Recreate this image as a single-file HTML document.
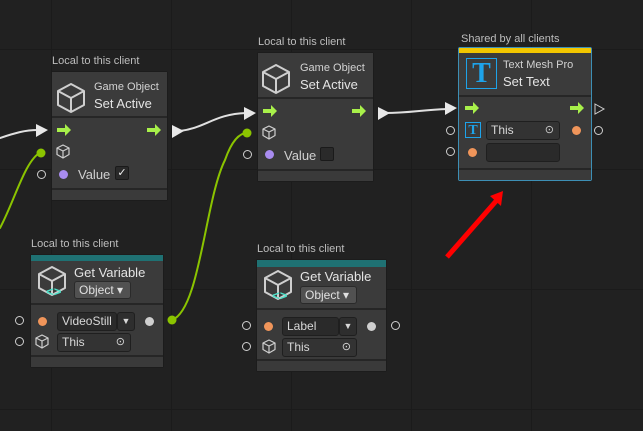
<!DOCTYPE html>
<html><head><style>
*{margin:0;padding:0;box-sizing:border-box}
body{width:643px;height:431px;overflow:hidden;background:#212121;font-family:"Liberation Sans",sans-serif;position:relative;
background-image:linear-gradient(90deg,#1b1b1b 1px,transparent 1px),linear-gradient(#1b1b1b 1px,transparent 1px);
background-size:120px 120px;background-position:51px 49px}
.abs{position:absolute}
.lbl{position:absolute;font-size:11px;color:#bdbdbd;white-space:nowrap}
.node{position:absolute;background:#3a3a3a;border:1px solid #1c1c1c;border-radius:2px}
.hd{position:absolute;left:0;right:0;top:0;background:#3b3b3b;border-bottom:2px solid #262626}
.ft{position:absolute;left:0;right:0;bottom:0;height:12px;background:#3a3a3a;border-top:2px solid #262626}
.t1{position:absolute;font-size:11px;color:#d2d2d2;white-space:nowrap}
.t2{position:absolute;font-size:13px;color:#e4e4e4;white-space:nowrap}
.oc{position:absolute;width:9px;height:9px;border:1px solid #cfcfcf;border-radius:50%}
.dot{position:absolute;width:9px;height:9px;border-radius:50%}
.fld{position:absolute;background:#2a2a2a;border:1px solid #1f1f1f;border-radius:3px;color:#d8d8d8;font-size:12px;padding-left:4px;line-height:17px;height:19px}
.dd{position:absolute;background:#515151;border:1px solid #2a2a2a;border-radius:3px;color:#e0e0e0;font-size:12px;line-height:16px;height:18px;padding-left:4px}
</style></head><body>
<svg class="abs" style="left:0;top:0" width="643" height="431">
<g fill="none" stroke-linecap="round">
<path d="M0 138 C15 133 25 130 38 130" stroke="#e0e0e0" stroke-width="2"/>
<path d="M180 131 C205 128 215 114 246 113" stroke="#e0e0e0" stroke-width="2"/>
<path d="M385 113 C410 113 420 110 448 109" stroke="#e0e0e0" stroke-width="2"/>
<path d="M41 152 C25 160 15 200 0 228" stroke="#8bc400" stroke-width="2"/>
<path d="M172 320 C200 310 205 200 225 160 C232 140 240 133 247 133" stroke="#8bc400" stroke-width="2"/>
</g>
<line x1="447" y1="257" x2="497" y2="200" stroke="#ff0000" stroke-width="5"/>
<polygon points="503,191 490,196 501,206" fill="#ff0000"/>
</svg>

<div class="lbl" style="left:52px;top:55px">Local to this client</div>
<div class="node" style="left:51px;top:71px;width:117px;height:130px">
<div class="hd" style="height:46px"></div>
<div class="t1" style="left:42px;top:9px">Game Object</div>
<div class="t2" style="left:42px;top:24px">Set Active</div>
<div class="dot" style="left:7px;top:98px;background:#a98cf0"></div>
<div class="t2" style="left:26px;top:95px;color:#d0d0d0">Value</div>
<div class="abs" style="left:63px;top:94px;width:14px;height:14px;background:#2a2a2a;border:1px solid #1a1a1a;border-radius:2px;color:#eee;font-size:11px;text-align:center;line-height:13px">✓</div>
<div class="ft"></div></div>
<div class="oc" style="left:37px;top:170px"></div>

<div class="lbl" style="left:258px;top:36px">Local to this client</div>
<div class="node" style="left:257px;top:52px;width:117px;height:130px">
<div class="hd" style="height:46px"></div>
<div class="t1" style="left:42px;top:9px">Game Object</div>
<div class="t2" style="left:42px;top:24px">Set Active</div>
<div class="dot" style="left:7px;top:97px;background:#a98cf0"></div>
<div class="t2" style="left:26px;top:95px;color:#d0d0d0">Value</div>
<div class="abs" style="left:62px;top:94px;width:14px;height:14px;background:#2a2a2a;border:1px solid #1a1a1a;border-radius:2px"></div>
<div class="ft"></div></div>
<div class="oc" style="left:243px;top:150px"></div>

<div class="lbl" style="left:461px;top:33px">Shared by all clients</div>
<div class="node" style="left:458px;top:47px;width:134px;height:134px;border-color:#3d8fb5">
<div class="abs" style="left:0;right:0;top:0;height:5px;background:#f2c600"></div>
<div class="hd" style="top:5px;height:44px"></div>
<div class="abs" style="left:7px;top:10px;width:31px;height:31px;border:1px solid #1ea3ea;color:#1ea3ea;font:bold 28px 'Liberation Serif',serif;text-align:center;line-height:30px">T</div>
<div class="t1" style="left:44px;top:11px">Text Mesh Pro</div>
<div class="t2" style="left:44px;top:26px">Set Text</div>
<div class="abs" style="left:6px;top:74px;width:16px;height:16px;border:1px solid #1ea3ea;color:#1ea3ea;font:bold 14px 'Liberation Serif',serif;text-align:center;line-height:15px">T</div>
<div class="fld" style="left:27px;top:73px;width:74px;background:#333">This<span style="position:absolute;right:5px;top:0;font-size:11px;color:#ccc">⊙</span></div>
<div class="dot" style="left:113px;top:78px;background:#f0955a"></div>
<div class="dot" style="left:9px;top:100px;background:#f0955a"></div>
<div class="fld" style="left:27px;top:95px;width:74px"></div>
<div class="ft"></div></div>
<div class="oc" style="left:446px;top:126px"></div>
<div class="oc" style="left:446px;top:147px"></div>
<div class="oc" style="left:594px;top:126px"></div>

<div class="lbl" style="left:31px;top:238px">Local to this client</div>
<div class="node" style="left:30px;top:254px;width:134px;height:114px">
<div class="abs" style="left:0;right:0;top:0;height:6px;background:#1f7173"></div>
<div class="hd" style="top:6px;height:44px"></div>
<div class="t2" style="left:43px;top:10px">Get Variable</div>
<div class="dd" style="left:43px;top:26px;width:57px">Object ▾</div>
<div class="dot" style="left:7px;top:62px;background:#f0955a"></div>
<div class="fld" style="left:26px;top:57px;width:60px">VideoStill</div>
<div class="fld" style="left:86px;top:57px;width:18px;background:#2e2e2e;padding:0;text-align:center;font-size:9px">▼</div>
<div class="dot" style="left:114px;top:62px;background:#cfcfcf"></div>
<div class="fld" style="left:26px;top:78px;width:74px;background:#333">This<span style="position:absolute;right:5px;top:0;font-size:11px">⊙</span></div>
<div class="ft"></div></div>
<div class="oc" style="left:15px;top:316px"></div>
<div class="oc" style="left:15px;top:337px"></div>

<div class="lbl" style="left:257px;top:243px">Local to this client</div>
<div class="node" style="left:256px;top:259px;width:131px;height:113px">
<div class="abs" style="left:0;right:0;top:0;height:7px;background:#1f7173"></div>
<div class="hd" style="top:7px;height:43px"></div>
<div class="t2" style="left:43px;top:9px">Get Variable</div>
<div class="dd" style="left:43px;top:26px;width:57px">Object ▾</div>
<div class="dot" style="left:7px;top:62px;background:#f0955a"></div>
<div class="fld" style="left:25px;top:57px;width:57px">Label</div>
<div class="fld" style="left:82px;top:57px;width:18px;background:#2e2e2e;padding:0;text-align:center;font-size:9px">▼</div>
<div class="dot" style="left:110px;top:62px;background:#cfcfcf"></div>
<div class="fld" style="left:25px;top:78px;width:75px;background:#333">This<span style="position:absolute;right:5px;top:0;font-size:11px">⊙</span></div>
<div class="ft"></div></div>
<div class="oc" style="left:242px;top:321px"></div>
<div class="oc" style="left:242px;top:342px"></div>
<div class="oc" style="left:391px;top:321px"></div>

<svg class="abs" style="left:0;top:0;z-index:5" width="643" height="431">
<defs>
<g id="cube" fill="none" stroke="#cfcfcf" stroke-width="2" stroke-linejoin="round"><path d="M0 -13 L13 -6 L13 8 L0 15 L-13 8 L-13 -6 Z M-13 -6 L0 1 L13 -6 M0 1 L0 15"/></g>
<g id="scube" fill="none" stroke="#cfcfcf" stroke-width="1.2" stroke-linejoin="round"><path d="M0 -6 L6 -3 L6 3.5 L0 7 L-6 3.5 L-6 -3 Z M-6 -3 L0 0 L6 -3 M0 0 L0 7"/></g>
<g id="arr" fill="#a8f04a"><rect x="-7" y="-2" width="9" height="4"/><polygon points="1,-6 7,0 1,6"/></g>
</defs>
<polygon points="36,124 48,130 36,137" fill="#e8e8e8"/>
<polygon points="172,125 184,131 172,138" fill="#e8e8e8"/>
<polygon points="244,107 256,113 244,120" fill="#e8e8e8"/>
<polygon points="378,107 390,113 378,120" fill="#e8e8e8"/>
<polygon points="445,102 457,108 445,115" fill="#e8e8e8"/>
<polygon points="595,104 604,109 595,114" fill="none" stroke="#cfcfcf"/>
<circle cx="41" cy="153" r="4.5" fill="#8bc400"/>
<circle cx="247" cy="133" r="4.5" fill="#8bc400"/>
<circle cx="172" cy="320" r="4.5" fill="#8bc400"/>
<use href="#cube" x="71" y="97"/><use href="#scube" x="63" y="151"/>
<use href="#arr" x="64" y="130"/><use href="#arr" x="154" y="130"/>
<use href="#cube" x="276" y="78"/><use href="#scube" x="269" y="132"/>
<use href="#arr" x="270" y="111"/><use href="#arr" x="359" y="111"/>
<use href="#arr" x="472" y="108"/><use href="#arr" x="577" y="108"/>
<use href="#cube" x="52" y="280"/><use href="#scube" x="42" y="341"/>
<use href="#cube" x="278" y="284"/><use href="#scube" x="269" y="346"/>
<text x="46" y="296" fill="#4ee0c8" font-size="13" font-weight="bold" font-family="Liberation Mono">&lt;&gt;</text>
<text x="272" y="300" fill="#4ee0c8" font-size="13" font-weight="bold" font-family="Liberation Mono">&lt;&gt;</text>
</svg>
</body></html>
